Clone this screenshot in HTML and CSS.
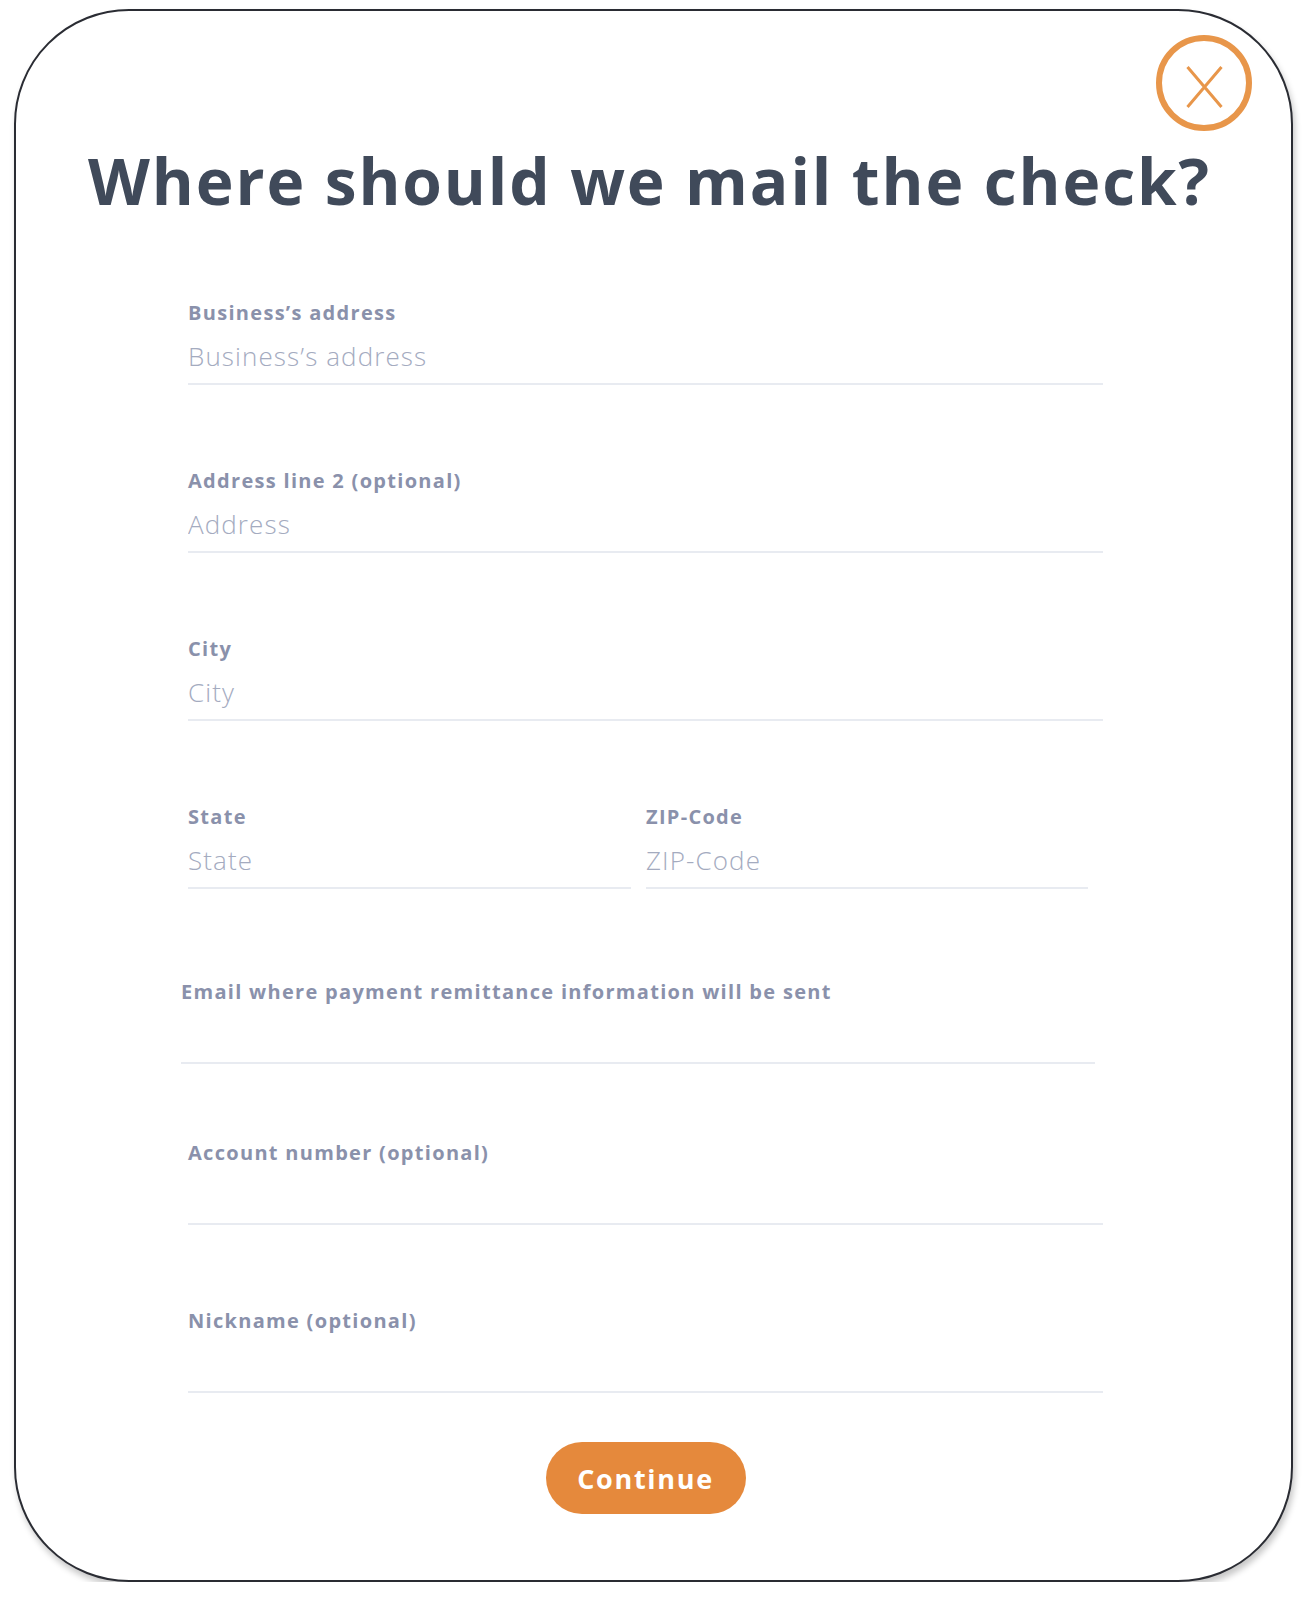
FILE: index.html
```html
<!DOCTYPE html>
<html lang="en">
<head>
<meta charset="utf-8">
<title>Where should we mail the check?</title>
<link rel="stylesheet" href="styles.css">
</head>
<body>
<div class="card">
  <button class="close" aria-label="Close">
    <svg width="98" height="98" viewBox="0 0 98 98">
      <circle cx="49" cy="49" r="45" fill="none" stroke="#e8964a" stroke-width="6"/>
      <path d="M32.5 33 L66.5 73 M66.5 33 L32.5 73" stroke="#e8964a" stroke-width="3" fill="none"/>
    </svg>
  </button>
  <h1 class="title">Where should we mail the check?</h1>
  <form class="form">
    <div class="field">
      <label class="label">Business’s address</label>
      <input class="input" type="text" placeholder="Business’s address">
    </div>
    <div class="field">
      <label class="label">Address line 2 (optional)</label>
      <input class="input" type="text" placeholder="Address">
    </div>
    <div class="field">
      <label class="label">City</label>
      <input class="input" type="text" placeholder="City">
    </div>
    <div class="row">
      <div class="field field-state">
        <label class="label">State</label>
        <input class="input" type="text" placeholder="State">
      </div>
      <div class="field field-zip">
        <label class="label">ZIP-Code</label>
        <input class="input" type="text" placeholder="ZIP-Code">
      </div>
    </div>
    <div class="field field-email">
      <label class="label">Email where payment remittance information will be sent</label>
      <input class="input" type="email">
    </div>
    <div class="field">
      <label class="label">Account number (optional)</label>
      <input class="input" type="text">
    </div>
    <div class="field">
      <label class="label">Nickname (optional)</label>
      <input class="input" type="text">
    </div>
    <div class="actions">
      <button class="continue" type="button">Continue</button>
    </div>
  </form>
</div>
</body>
</html>
```

FILE: styles.css
```css
* { box-sizing: border-box; }
html, body { margin: 0; padding: 0; background: #ffffff; }
body { font-family: "Open Sans", "Liberation Sans", sans-serif; }

.card {
  position: relative;
  margin: 9px 0 0 14px;
  width: 1279px;
  height: 1573px;
  border: 2px solid #2a2c33;
  border-radius: 115px;
  background: #fff;
  box-shadow: 2px 5px 6px rgba(0,0,0,0.22);
}

.close {
  position: absolute;
  top: 23px;
  right: 38px;
  width: 98px;
  height: 98px;
  padding: 0;
  border: 0;
  background: transparent;
  cursor: pointer;
}
.close svg { display: block; }

.title {
  margin: 0;
  padding-top: 126px;
  padding-right: 8px;
  text-align: center;
  font-family: "Open Sans", sans-serif;
  font-weight: 700;
  font-size: 64px;
  line-height: 88px;
  color: #404a5a;
  letter-spacing: 1.9px;
}

.form {
  display: flex;
  flex-direction: column;
  gap: 84px;
  width: 915px;
  margin: 0 0 0 172px;
  padding-top: 76px;
}

.field { display: flex; flex-direction: column; }

.label {
  font-family: "Open Sans", sans-serif;
  font-weight: 700;
  font-size: 20px;
  line-height: 24px;
  color: #8a91ab;
  letter-spacing: 1.3px;
}

.input {
  margin-top: 16px;
  height: 44px;
  padding: 0 0 12px 0;
  border: 0;
  border-bottom: 2px solid #e8ebf1;
  outline: none;
  font-family: "Open Sans", sans-serif;
  font-weight: 300;
  font-size: 26px;
  line-height: 30px;
  color: #5a6275;
  background: transparent;
  letter-spacing: 1.1px;
}
.input::placeholder { color: #a4abbf; opacity: 1; }

.row { display: flex; gap: 15px; width: 900px; }
.field-state { width: 443px; }
.field-zip { width: 442px; }

.field-email { margin: 7px 8px -7px -7px; }

.actions { display: flex; justify-content: center; margin-top: -35px; }

.continue {
  width: 200px;
  height: 72px;
  border: 0;
  border-radius: 36px;
  background: #e5893c;
  color: #fff;
  font-family: "Open Sans", sans-serif;
  font-weight: 700;
  font-size: 27px;
  letter-spacing: 1.7px;
  cursor: pointer;
}
```
